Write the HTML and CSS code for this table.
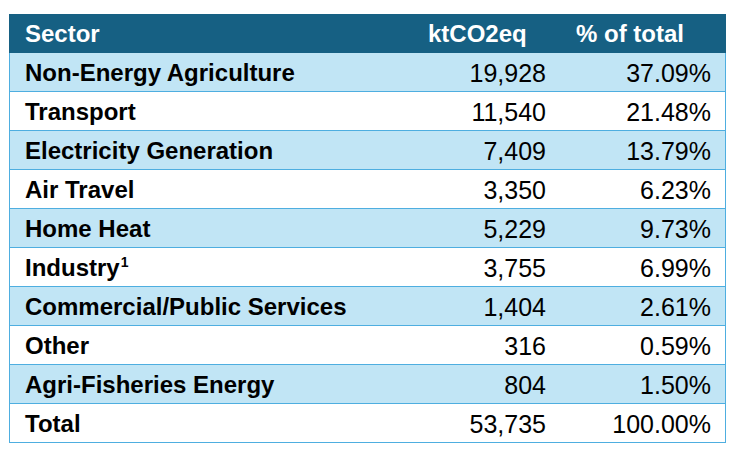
FILE: index.html
```html
<!DOCTYPE html>
<html lang="en">
<head>
<meta charset="utf-8">
<title>Emissions by sector</title>
<link rel="stylesheet" href="styles.css">
</head>
<body>
<div class="table">
  <div class="row head">
    <div class="cell label">Sector</div>
    <div class="cell hcol">ktCO2eq</div>
    <div class="cell hcol">% of total</div>
  </div>
  <div class="row band">
    <div class="cell label">Non-Energy Agriculture</div>
    <div class="cell num">19,928</div>
    <div class="cell num pct">37.09%</div>
  </div>
  <div class="row">
    <div class="cell label">Transport</div>
    <div class="cell num">11,540</div>
    <div class="cell num pct">21.48%</div>
  </div>
  <div class="row band">
    <div class="cell label">Electricity Generation</div>
    <div class="cell num">7,409</div>
    <div class="cell num pct">13.79%</div>
  </div>
  <div class="row">
    <div class="cell label">Air Travel</div>
    <div class="cell num">3,350</div>
    <div class="cell num pct">6.23%</div>
  </div>
  <div class="row band">
    <div class="cell label">Home Heat</div>
    <div class="cell num">5,229</div>
    <div class="cell num pct">9.73%</div>
  </div>
  <div class="row">
    <div class="cell label">Industry<sup class="note">1</sup></div>
    <div class="cell num">3,755</div>
    <div class="cell num pct">6.99%</div>
  </div>
  <div class="row band">
    <div class="cell label">Commercial/Public Services</div>
    <div class="cell num">1,404</div>
    <div class="cell num pct">2.61%</div>
  </div>
  <div class="row">
    <div class="cell label">Other</div>
    <div class="cell num">316</div>
    <div class="cell num pct">0.59%</div>
  </div>
  <div class="row band">
    <div class="cell label">Agri-Fisheries Energy</div>
    <div class="cell num">804</div>
    <div class="cell num pct">1.50%</div>
  </div>
  <div class="row">
    <div class="cell label">Total</div>
    <div class="cell num">53,735</div>
    <div class="cell num pct">100.00%</div>
  </div>
</div>
</body>
</html>
```
FILE: styles.css
```css
html, body {
  margin: 0;
  padding: 0;
  background: #ffffff;
}

body {
  padding: 14px 0 0 9px;
  font-family: "Liberation Sans", Arial, sans-serif;
  font-size: 24px;
  color: #000000;
}

.table {
  width: 717px;
}

.row {
  display: grid;
  grid-template-columns: 403px 148px 164px;
  height: 38px;
  border-left: 1px solid #4eaee0;
  border-right: 1px solid #4eaee0;
  border-bottom: 1px solid #4eaee0;
  background: #ffffff;
}

.row.head {
  height: 39px;
  background: #166083;
  border-color: #166083;
  border-bottom: none;
  color: #ffffff;
}

.row.band {
  background: #c1e5f5;
}

.cell {
  line-height: 38px;
  padding-top: 1px;
  white-space: nowrap;
}

.label {
  font-weight: 700;
  padding-left: 15px;
}

.hcol {
  font-weight: 700;
  padding-left: 15px;
}

.num {
  font-size: 25px;
  text-align: right;
  padding-right: 15px;
}

.num.pct {
  padding-right: 14px;
}

.note {
  font-size: 14px;
  line-height: 0;
  vertical-align: 9px;
  margin-left: 1px;
}
```
